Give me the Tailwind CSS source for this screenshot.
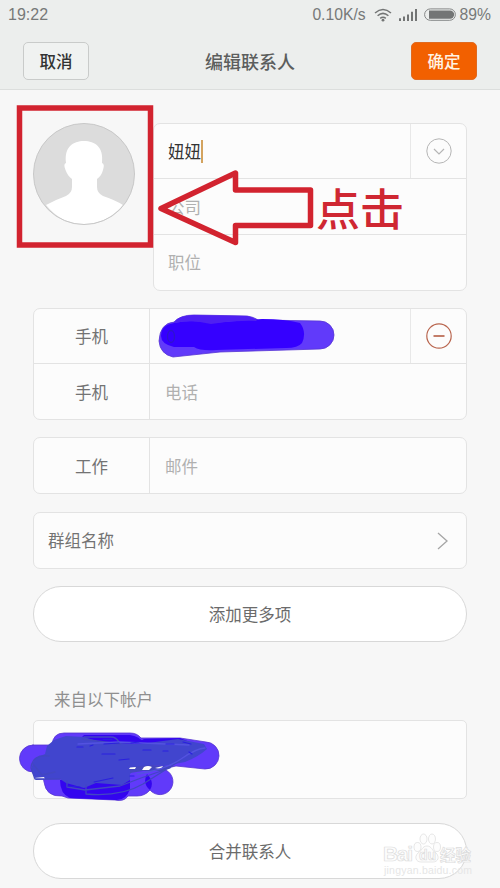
<!DOCTYPE html>
<html lang="zh-CN">
<head>
<meta charset="utf-8">
<title>编辑联系人</title>
<script src="https://cdn.jsdelivr.net/npm/@tailwindcss/browser@4"></script>
</head>
<body class="bg-[#f7f7f7]">
<div class="relative w-[500px] h-[888px] overflow-hidden bg-[#f7f7f7] font-['Noto_Sans_CJK_SC',sans-serif] text-[16.5px] leading-6 text-[#737373]">
  <header class="h-[90px] bg-[#eceeed] border-b border-[#dcdedd]">
    <div class="h-[29px] flex items-center justify-between pl-[8px] pr-[9px] font-['Liberation_Sans',sans-serif] text-[16px] text-[#777979]">
      <span>19:22</span>
      <div class="flex items-center text-[15.7px]">
        <span class="mr-[8px]">0.10K/s</span>
        <svg class="w-[18px] h-[14px] mr-[7px]" viewBox="0 0 18 14" fill="none" stroke="#737575" stroke-width="1.5"><path d="M1 5Q9-2 17 5M3.6 7.800Q9 3 14.400 7.800M6.200 10.400Q9 8 11.800 10.400"/><circle cx="9" cy="12.200" r="1.400" fill="#737575" stroke="none"/></svg>
        <svg class="w-[18px] h-[12px] mr-[7px]" viewBox="0 0 18 13" preserveAspectRatio="none" fill="#737575"><path d="M0 10h2v3H0zM4 8h2v5H4zM8 6h2v7H8zM12 3h2v10h-2zM16 0h2v13h-2z"/></svg>
        <svg class="w-[32px] h-[13px] mr-[4px]" viewBox="0 0 32 13"><rect x=".6" y=".9" width="30.800" height="11.400" rx="5.700" fill="none" stroke="#858787"/><path d="M5 2.400H26a4.200 4.200 0 0 1 0 8.400H5z" fill="#737575"/></svg>
        <span>89%</span>
      </div>
    </div>
    <div class="flex items-center justify-between h-[38px] mt-[13px] pl-[23px] pr-[23px]">
      <button class="w-[66px] h-[38px] rounded-[5px] border border-[#c9cbca] bg-[#f0f2f1] font-medium text-[#333]">取消</button>
      <h1 class="text-[18px] font-medium text-[#5c5e5d]">编辑联系人</h1>
      <button class="w-[66px] h-[38px] rounded-[5px] border border-[#e06a20] bg-[#f26000] font-medium text-[#fff3e4]">确定</button>
    </div>
  </header>

  <main class="px-[33px] pt-[33px]">
    <section class="flex justify-between">
      <svg class="w-[102px] h-[102px]" viewBox="0 0 102 102">
        <circle cx="51" cy="51" r="50.500" fill="#dcdcdc"/>
        <path d="M13 82Q22 77 33 73Q39 70 39 64V56C36 54 34 51 32.500 47Q30 41 33 40C31 24 40 18 51 18S71 24 69 40Q72 41 70 47C69 51 67 54 64 56V64Q64 70 70 73Q82 77 90 82Q74 101 51 101T13 82Z" fill="#fff"/>
        <circle cx="51" cy="51" r="50.500" fill="none" stroke="#c8c8c8"/>
      </svg>
      <div class="w-[314px] h-[168px] border border-[#e3e3e3] rounded-[7px] bg-[#fcfcfc] flex flex-col">
        <div class="h-[55px] flex border-b border-[#e3e3e3]">
          <div class="flex-1 flex items-center pl-[14px] text-[#333]"><span>妞妞</span><i class="w-[2px] h-[23px] bg-[#d3a35f]"></i></div>
          <div class="w-[56px] border-l border-[#e8e8e8] flex items-center justify-center">
            <svg class="w-[26px] h-[26px]" viewBox="0 0 26 26" fill="none" stroke="#b5b5b5"><circle cx="13" cy="13" r="12.200"/><path d="m8 11 5 5 5-5" stroke-width="1.200"/></svg>
          </div>
        </div>
        <div class="h-[56px] flex items-center pl-[14px] border-b border-[#e3e3e3] text-[#b0b0b0]">公司</div>
        <div class="flex-1 flex items-center pl-[14px] pb-px text-[#b0b0b0]">职位</div>
      </div>
    </section>

    <section class="mt-[17px] h-[112px] border border-[#e3e3e3] rounded-[7px] bg-[#fcfcfc] flex flex-col">
      <div class="h-[55px] flex border-b border-[#e3e3e3]">
        <div class="w-[116px] border-r border-[#e3e3e3] flex items-center justify-center">手机</div>
        <div class="flex-1"></div>
        <div class="w-[56px] border-l border-[#e8e8e8] flex items-center justify-center">
          <svg class="w-[26px] h-[26px]" viewBox="0 0 26 26" fill="none" stroke="#b9664f"><circle cx="13" cy="13" r="12.200" stroke-width="1.200"/><path d="M7.500 13h11" stroke-width="1.700"/></svg>
        </div>
      </div>
      <div class="flex-1 flex">
        <div class="w-[116px] border-r border-[#e3e3e3] flex items-center justify-center">手机</div>
        <div class="flex items-center pl-[15px] text-[#b0b0b0]">电话</div>
      </div>
    </section>

    <section class="mt-[17px] h-[57px] border border-[#e3e3e3] rounded-[7px] bg-[#fcfcfc] flex">
      <div class="w-[116px] border-r border-[#e3e3e3] flex items-center justify-center">工作</div>
      <div class="flex items-center pl-[15px] text-[#b0b0b0]">邮件</div>
    </section>

    <section class="mt-[18px] h-[57px] border border-[#e3e3e3] rounded-[7px] bg-[#fcfcfc] flex items-center justify-between pl-[14px] pr-[18px]">
      <span class="pb-px">群组名称</span>
      <svg class="w-[11px] h-[18px]" viewBox="0 0 11 18" fill="none" stroke="#a5a5a5" stroke-width="1.300"><path d="m1 1 9 8-9 8"/></svg>
    </section>

    <button class="mt-[17px] block w-full h-[56px] rounded-full border border-[#d8d8d8] bg-white text-[#6b6b6b]">添加更多项</button>

    <h2 class="mt-[45px] h-6 pl-[21px] text-[#8f8f8f]">来自以下帐户</h2>
    <section class="mt-[9px] h-[79px] border border-[#e3e3e3] rounded-[5px] bg-[#fcfcfc]"></section>
    <button class="mt-[24px] block w-full h-[56px] rounded-full border border-[#d8d8d8] bg-white text-[#6b6b6b]">合并联系人</button>
  </main>

  <!-- Marker strokes and callouts drawn over the form -->
  <svg class="absolute inset-0 w-[500px] h-[888px]" viewBox="0 0 500 888" fill="none" stroke-linecap="round" stroke-linejoin="round">
    <rect x="19.500" y="108" width="131" height="137" stroke="#d2232f" stroke-width="5.500" stroke-linejoin="miter"/>
    <path d="M161 208.500 235.500 173V190H310.500V225.500H235.500V242.500Z" stroke="#d2232f" stroke-width="5.500"/>

    <g>
      <path d="M174 322Q180 315 194 315L247 316Q254 317 258 320L320 321A14 14 0 0 1 320 349L220 352L173 357Q160 354 159 341Q160 323 174 322Z" fill="#613afa" stroke="#5735d4" stroke-width=".8"/>
      <path d="M174 323Q193 319 211 323L262 319Q285 319 300 323Q307 332 302 343Q298 348 286 348L216 350Q200 351 194 347L174 347Q161 344 161 336Q161 325 174 323Z" fill="#3500ff"/>
      <path d="M174 323Q177 316 192 315L247 316Q255 318 257 321Q234 320 211 324Q191 319 174 323Z" fill="#4f20f2"/>
      <ellipse cx="171" cy="336.500" rx="3.500" ry="6" stroke="#3014cc" stroke-width="1.300"/>
    </g>

    <g>
      <path d="M33 745H52Q53 733 64 733H130Q137 733 141 738L180 738L206 742A13.500 13.500 0 0 1 205 769L176 766L163 769A13 13 0 1 1 150 790Q145 796 137 796L128 796Q124 802 115 800L68 798L62 796Q46 797 44 782L42 772H33A13.500 13.500 0 0 1 33 745Z" fill="#613afa" stroke="#5736d0" stroke-width=".8"/>
      <path d="M60 780H130V789Q126 801 115 800L70 798Q60 794 60 780ZM84 735H130Q139 736 144 743L100 746L77 742ZM135 744 144 739 180 738 192 743 150 748ZM147 774Q155 782 150 790Q142 783 147 774Z" fill="#3305ef"/>
      <path d="M54 740 66 736 84 737 100 742 140 744 178 739 204 744 207 749Q198 757 185 762L164 766 154 765 136 768 130 774 130 780 122 785 96 783 84 788 66 783 60 779 36 780 31 770 34 759 45 754 47 746Z" fill="#4145ce"/>
      <path d="M130 767 152 765 164 766 174 766 163 771 151 771 143 771 130 773Z" fill="#4447bd"/>
      <path d="M144 767Q148 765 152 767L149 770H142ZM155 768 163 766 161 769ZM130 767.500 136 767 135 769H129ZM34 778 44 777 45 779H35Z" fill="#fcfcfc"/>
      <g stroke="#4247c2" stroke-width="1.300">
        <path d="M49 756Q32 754 31 768L35 779H60M33 764 42 775 55 772"/>
        <path d="M67 781V787L85 790 120 786 141 778 170 768M86 785V794Q121 797 143 784L181 760M84 737H111Q116 737 119 742M82 739 120 744"/>
        <path d="M137 774Q165 770 181 759T205 748M78 744 119 742 189 745" stroke="#5352e0"/>
      </g>
      <path d="M103 739.500H112M104 744 119 743M131 743 139 742M102 754H115M119 760 129 759M143 750H151M163 751H168M90 746 93 745M77 747H83M94 782 113 778M68 786 80 787M130 776H134M183 742 191 744M189 752 192 754M166 744H174" stroke="#2a20df" stroke-width="1.200"/>
    </g>
  </svg>
  <div class="absolute left-[316px] top-[180px] h-[54px] leading-[54px] text-[44px] font-medium text-[#cf2732] whitespace-nowrap">点击</div>

  <!-- Watermark -->
  <div class="absolute left-[383px] top-[833px] w-[92px] h-[46px] text-[#fdfdfd]">
    <svg class="w-[92px] h-[46px] overflow-visible" viewBox="0 0 92 46" fill="#fdfdfd" stroke="#dcdcdc" stroke-width=".7" stroke-linejoin="round">
      <text x="0" y="28" font-family="Liberation Sans" font-weight="bold" font-size="21" textLength="30">Bai</text>
      <g><ellipse cx="34.500" cy="14" rx="3.500" ry="4.500"/><ellipse cx="40.500" cy="6" rx="3.500" ry="5"/><ellipse cx="49" cy="6" rx="3.500" ry="5"/><ellipse cx="54" cy="14" rx="3.500" ry="4.500"/><path d="M44 13C39 13 39 18 35 20C31 24 33 29 38 29H50C55 29 57 24 53 20C49 18 49 13 44 13Z"/></g>
      <text x="36" y="27" font-family="Liberation Sans" font-weight="bold" font-size="14">du</text>
      <text x="57" y="27.500" font-family="Noto Sans CJK SC" font-weight="bold" font-size="15.500">经验</text>
      <text x="1" y="41" font-family="Liberation Sans" font-size="10.500" textLength="88" fill="#e6e6e6" stroke="none">jingyan.baidu.com</text>
    </svg>
  </div>
</div>
</body>
</html>
